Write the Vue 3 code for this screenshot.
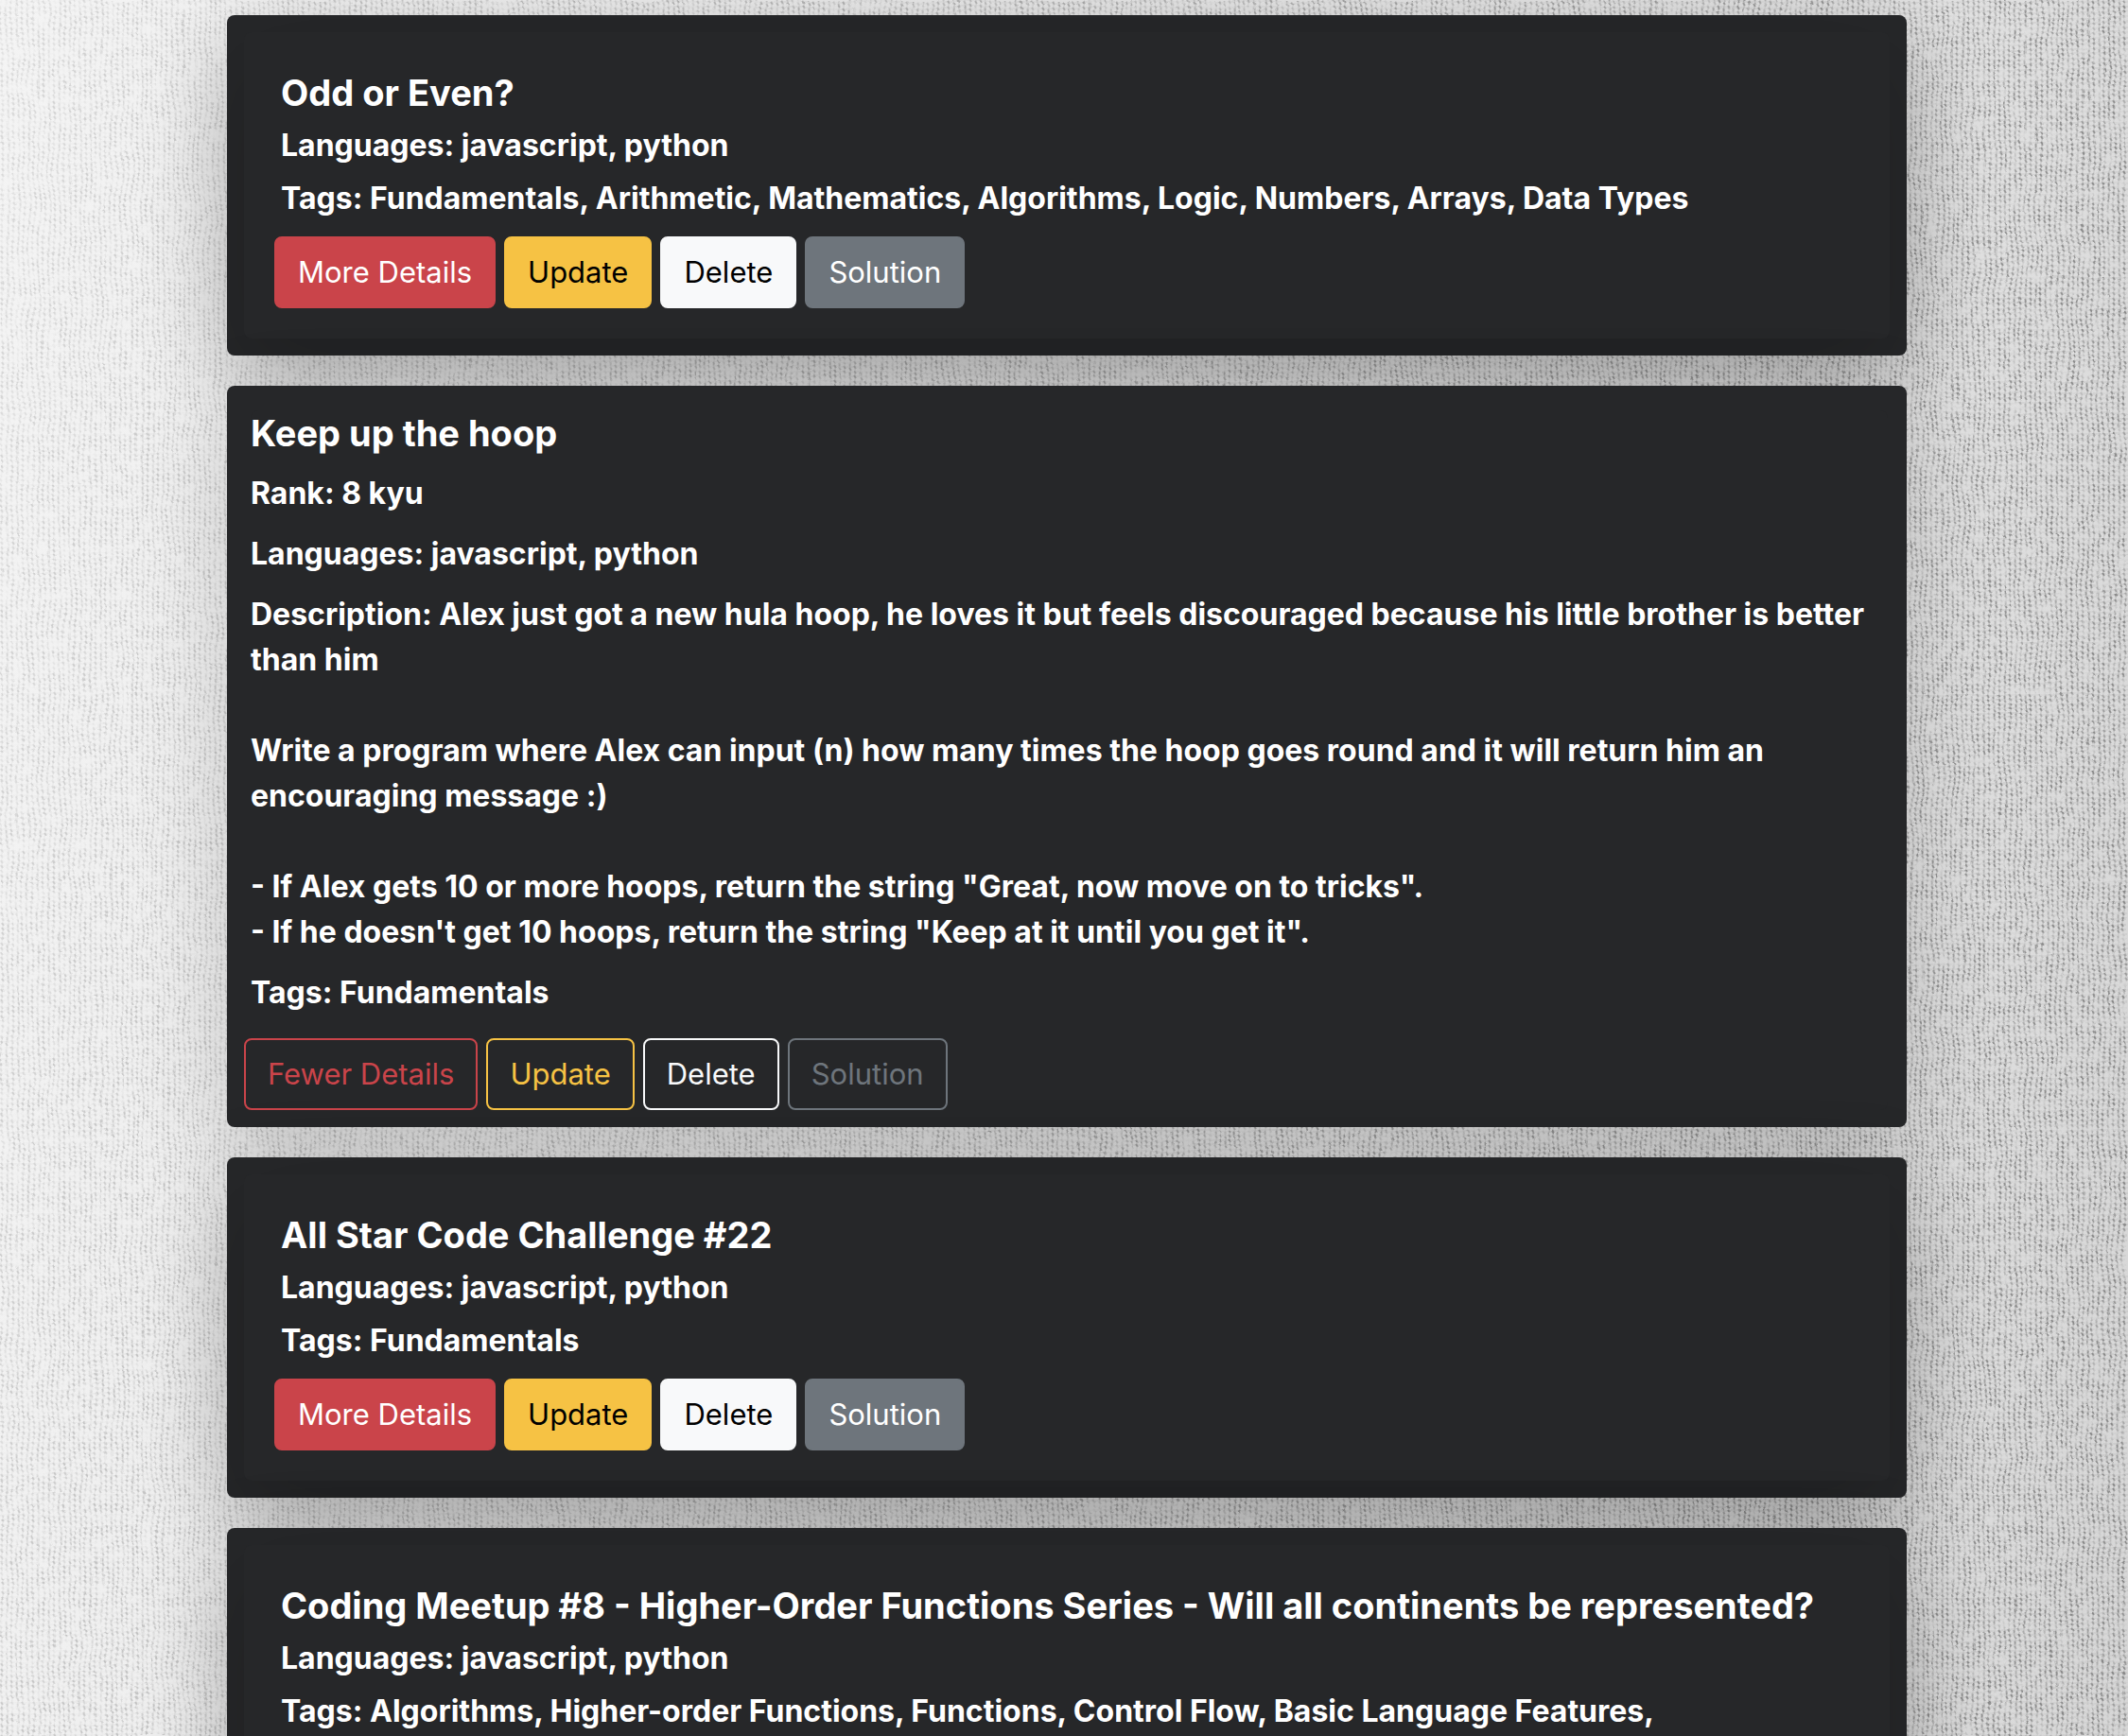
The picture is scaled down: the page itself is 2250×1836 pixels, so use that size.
<script setup>
const cards = [
  { title: 'Odd or Even?', tags: 'Fundamentals, Arithmetic, Mathematics, Algorithms, Logic, Numbers, Arrays, Data Types' },
  {
    title: 'Keep up the hoop',
    tags: 'Fundamentals',
    rank: '8 kyu',
    description: `Alex just got a new hula hoop, he loves it but feels discouraged because his little brother is better than him

Write a program where Alex can input (n) how many times the hoop goes round and it will return him an encouraging message :)

- If Alex gets 10 or more hoops, return the string "Great, now move on to tricks".
- If he doesn't get 10 hoops, return the string "Keep at it until you get it".`,
  },
  { title: 'All Star Code Challenge #22', tags: 'Fundamentals' },
  { title: 'Coding Meetup #8 - Higher-Order Functions Series - Will all continents be represented?', tags: 'Algorithms, Higher-order Functions, Functions, Control Flow, Basic Language Features,' },
]
</script>

<template>
  <main class="page">
    <svg class="cloth" aria-hidden="true">
      <defs>
        <pattern id="threads" width="11" height="11" patternUnits="userSpaceOnUse">
          <path d="M2 0v11M8 0v11" stroke="#000" stroke-width="2" opacity="0.12" />
          <path d="M0 2h11M0 8h11" stroke="#000" stroke-width="2" opacity="0.1" />
          <path d="M1 1l2 3M7 3l2 3M1 7l2 3M7 9l1 2M7 0l1 1" stroke="#000" stroke-width="2" opacity="0.5" />
        </pattern>
        <filter id="weave" x="0" y="0" width="100%" height="100%" color-interpolation-filters="sRGB">
          <feTurbulence type="fractalNoise" baseFrequency="0.02" numOctaves="2" seed="4" result="warp" />
          <feDisplacementMap in="SourceGraphic" in2="warp" scale="9" xChannelSelector="R" yChannelSelector="G" result="bent" />
          <feGaussianBlur in="bent" stdDeviation="0.7" result="soft" />
          <feTurbulence type="fractalNoise" baseFrequency="0.08 0.08" numOctaves="3" seed="9" result="grain" />
          <feColorMatrix in="grain" type="matrix" values="0 0 0 0 0  0 0 0 0 0  0 0 0 0 0  2 0 0 0 -0.3" result="worn" />
          <feComposite in="soft" in2="worn" operator="in" />
        </filter>
      </defs>
      <rect width="100%" height="100%" fill="url(#threads)" filter="url(#weave)" />
    </svg>
    <div class="list">
      <article v-for="card in cards" :key="card.title" class="card" :class="{ open: card.rank }">
        <div class="body">
          <h2>{{ card.title }}</h2>
          <p v-if="card.rank">Rank: {{ card.rank }}</p>
          <p>Languages: javascript, python</p>
          <p v-if="card.description" class="description">Description: {{ card.description }}</p>
          <p>Tags: {{ card.tags }}</p>
          <div class="actions">
            <button type="button" class="danger">{{ card.rank ? 'Fewer Details' : 'More Details' }}</button>
            <button type="button" class="warning">Update</button>
            <button type="button" class="light">Delete</button>
            <button type="button" class="secondary">Solution</button>
          </div>
        </div>
      </article>
    </div>
  </main>
</template>

<style>
body { margin: 0; }
</style>

<style scoped>
* { box-sizing: border-box; }
.page {
  position: relative;
  height: 100vh;
  overflow: hidden;
  background: linear-gradient(97deg, #f4f4f4 0%, #f0f0f0 12%, #e6e6e6 50%, #e0e0e0 86%, #d6d6d6 100%);
  font-family: Inter, "Liberation Sans", sans-serif;
  color: #fff;
}
.cloth {
  position: absolute;
  inset: 0;
  width: 100%;
  height: 100%;
  opacity: 0.6;
  mask-image: linear-gradient(97deg, rgba(0, 0, 0, 0.3), rgba(0, 0, 0, 0.5) 12%, #000 92%);
}
.list {
  position: relative;
  display: flex;
  flex-direction: column;
  gap: 32px;
  margin: 0 234px 0 240px;
  padding-top: 16px;
}
.card {
  flex: none;
  padding: 18px;
  border-radius: 8px;
  background: #262729;
  box-shadow: 0 32px 96px rgba(0, 0, 0, 0.17);
}
.body {
  padding: 40px 36px 32px 39px;
  border-radius: 8px;
  background: #262729;
  box-shadow: 0 32px 96px rgba(0, 0, 0, 0.17);
}
h2 { margin: 0 0 8px; font-size: 38px; line-height: 48px; font-weight: 700; }
p { margin: 0 0 8px; font-size: 32px; line-height: 48px; font-weight: 700; }
.description { white-space: pre-line; }
.actions { display: flex; gap: 9px; margin: 16px 0 0 -7px; }
button {
  height: 76px;
  padding: 0 23px;
  border: 2px solid;
  border-radius: 8px;
  font: 400 31px/48px Inter, "Liberation Sans", sans-serif;
}
.danger { color: #fff; background: #ca444a; border-color: #ca444a; }
.warning { color: #000; background: #f6c244; border-color: #f6c244; }
.light { color: #000; background: #f8f9fa; border-color: #f8f9fa; }
.secondary { color: #fff; background: #6e757c; border-color: #6e757c; }
.open { padding: 26px 20px 18px 25px; }
.open .body { padding: 0; box-shadow: none; }
.open p, .open h2 { margin-bottom: 16px; }
.open .actions { margin-top: 24px; }
.open button { background: transparent; }
.open .danger { color: #ca444a; }
.open .warning { color: #f6c244; }
.open .light { color: #f8f9fa; }
.open .secondary { color: #6e757c; }
</style>
